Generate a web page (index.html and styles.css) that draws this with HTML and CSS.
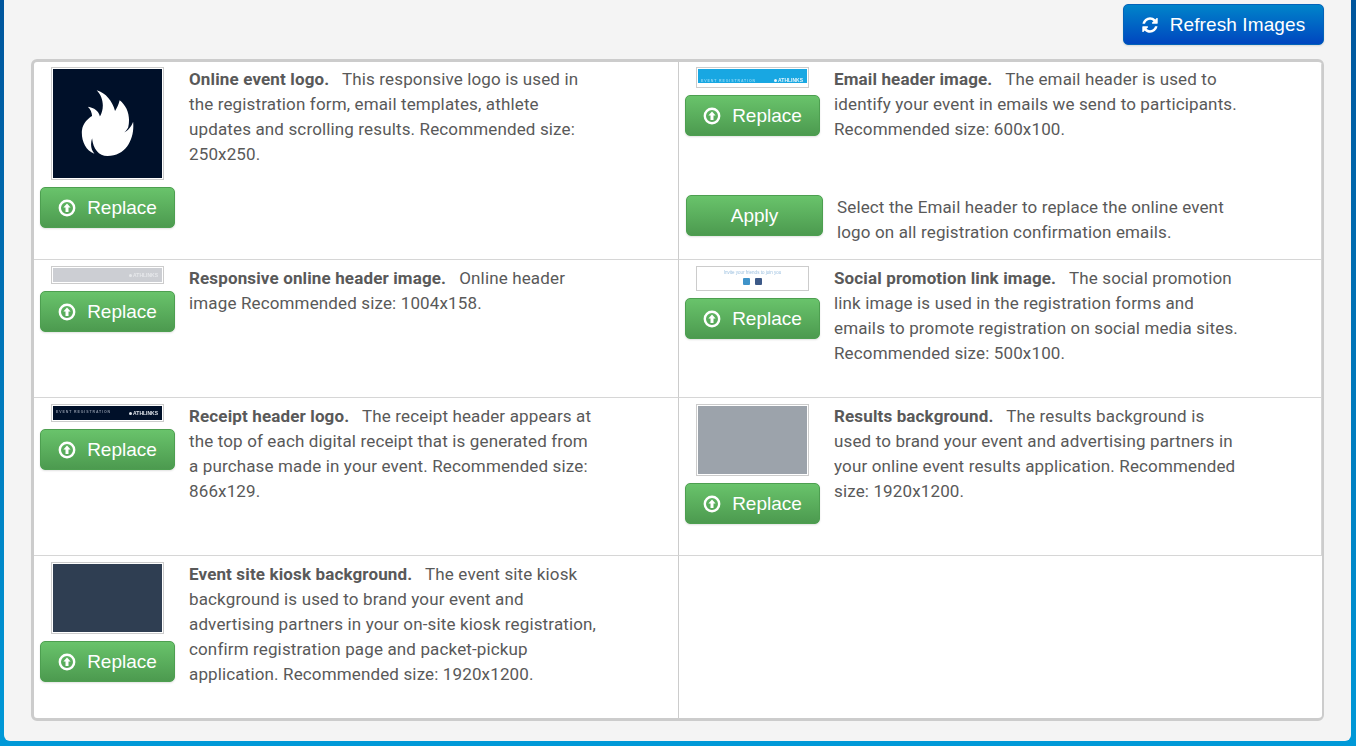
FILE: index.html
```html
<!DOCTYPE html>
<html lang="en">
<head>
<meta charset="utf-8">
<title>Event images</title>
<link rel="stylesheet" href="styles.css">
</head>
<body>
<svg class="defs" aria-hidden="true">
  <symbol id="i-up" viewBox="0 0 18 18">
    <circle cx="9" cy="9" r="7.2" fill="none" stroke="currentColor" stroke-width="2.4"/>
    <path d="M9 4.4 12.6 8.4 10.5 8.4 10.5 13 7.5 13 7.5 8.4 5.4 8.4Z" fill="currentColor"/>
  </symbol>
  <symbol id="i-refresh" viewBox="0 0 1792 1792">
    <path fill="currentColor" d="M1639 1056q0 5-1 7-64 268-268 434.5t-478 166.5q-146 0-282.5-55t-243.5-157l-129 129q-19 19-45 19t-45-19-19-45v-448q0-26 19-45t45-19h448q26 0 45 19t19 45-19 45l-137 137q71 66 161 102t187 36q134 0 250-65t186-179q11-17 53-117 8-23 30-23h192q13 0 22.5 9.5t9.5 22.5zm25-800v448q0 26-19 45t-45 19h-448q-26 0-45-19t-19-45 19-45l138-138q-148-137-349-137-134 0-250 65t-186 179q-11 17-53 117-8 23-30 23h-199q-13 0-22.5-9.5t-9.5-22.5v-7q65-268 270-434.5t480-166.5q146 0 284 55.5t245 156.5l130-129q19-19 45-19t45 19 19 45z"/>
  </symbol>
</svg>
<main class="panel">
  <div class="toolbar">
    <button class="btn btn-blue" type="button"><svg class="ico"><use href="#i-refresh"/></svg>Refresh Images</button>
  </div>
  <section class="grid">
    <article class="cell">
      <div class="media">
        <div class="thumb thumb-logo">
          <svg class="flame" viewBox="159 207 332 332"><path fill="#fff" d="M292 272C320 280 340 305 348 335 354 325 359 314 362 302 385 320 396 350 388 385 383 394 378 399 373 402 388 396 398 382 403 368 408 415 385 472 325 472 298 472 281 450 278 418 272 438 275 452 285 465 258 455 245 425 247 395 250 370 268 356 278 350 278 340 272 328 265 322 285 325 298 335 302 352 315 330 315 295 292 272Z"/></svg>
        </div>
        <button class="btn btn-green" type="button"><svg class="ico"><use href="#i-up"/></svg>Replace</button>
      </div>
      <p class="desc"><b>Online event logo.</b>&nbsp;&nbsp; This responsive logo is used in the registration form, email templates, athlete updates and scrolling results. Recommended size: 250x250.</p>
    </article>
    <article class="cell cell-right cell-email">
      <div class="entry">
        <div class="media">
          <div class="thumb thumb-email">
            <span class="thumb-small">EVENT REGISTRATION</span><span class="thumb-brand">ATHLINKS</span>
          </div>
          <button class="btn btn-green" type="button"><svg class="ico"><use href="#i-up"/></svg>Replace</button>
        </div>
        <p class="desc"><b>Email header image.</b>&nbsp;&nbsp; The email header is used to identify your event in emails we send to participants. Recommended size: 600x100.</p>
      </div>
      <div class="apply-row">
        <button class="btn btn-green btn-apply" type="button">Apply</button>
        <p class="desc">Select the Email header to replace the online event logo on all registration confirmation emails.</p>
      </div>
    </article>
    <article class="cell">
      <div class="media">
        <div class="thumb thumb-online"><span class="thumb-brand">ATHLINKS</span></div>
        <button class="btn btn-green" type="button"><svg class="ico"><use href="#i-up"/></svg>Replace</button>
      </div>
      <p class="desc"><b>Responsive online header image.</b>&nbsp;&nbsp; Online header image Recommended size: 1004x158.</p>
    </article>
    <article class="cell cell-right">
      <div class="media">
        <div class="thumb thumb-social">
          <span class="social-text">Invite your friends to join you</span>
          <span class="social-icons"><i class="dot dot-tw"></i><i class="dot dot-fb"></i></span>
        </div>
        <button class="btn btn-green" type="button"><svg class="ico"><use href="#i-up"/></svg>Replace</button>
      </div>
      <p class="desc"><b>Social promotion link image.</b>&nbsp;&nbsp; The social promotion link image is used in the registration forms and emails to promote registration on social media sites. Recommended size: 500x100.</p>
    </article>
    <article class="cell">
      <div class="media">
        <div class="thumb thumb-receipt">
          <span class="thumb-small">EVENT REGISTRATION</span><span class="thumb-brand">ATHLINKS</span>
        </div>
        <button class="btn btn-green" type="button"><svg class="ico"><use href="#i-up"/></svg>Replace</button>
      </div>
      <p class="desc"><b>Receipt header logo.</b>&nbsp;&nbsp; The receipt header appears at the top of each digital receipt that is generated from a purchase made in your event. Recommended size: 866x129.</p>
    </article>
    <article class="cell cell-right">
      <div class="media">
        <div class="thumb thumb-results"></div>
        <button class="btn btn-green" type="button"><svg class="ico"><use href="#i-up"/></svg>Replace</button>
      </div>
      <p class="desc"><b>Results background.</b>&nbsp;&nbsp; The results background is used to brand your event and advertising partners in your online event results application. Recommended size: 1920x1200.</p>
    </article>
    <article class="cell cell-last">
      <div class="media">
        <div class="thumb thumb-kiosk"></div>
        <button class="btn btn-green" type="button"><svg class="ico"><use href="#i-up"/></svg>Replace</button>
      </div>
      <p class="desc"><b>Event site kiosk background.</b>&nbsp;&nbsp; The event site kiosk background is used to brand your event and advertising partners in your on-site kiosk registration, confirm registration page and packet-pickup application. Recommended size: 1920x1200.</p>
    </article>
    <div class="cell-empty"></div>
  </section>
</main>
</body>
</html>
```
FILE: styles.css
```css
* { box-sizing: border-box; }
html, body { height: 100%; }
body {
  margin: 0;
  padding: 0 5px 5px 4px;
  overflow: hidden;
  background: linear-gradient(to bottom, #00559c 0%, #0099d8 100%);
  font-family: Roboto, "Liberation Sans", sans-serif;
  font-size: 17px;
  letter-spacing: .14px;
  line-height: 25px;
  color: #595959;
}
.defs { position: absolute; width: 0; height: 0; }
.panel {
  height: 741px;
  padding: 4px 27px 0;
  background: #f4f4f4;
  border-radius: 0 0 6px 6px;
}
.toolbar { display: flex; justify-content: flex-end; height: 55px; }
.btn {
  display: inline-flex;
  align-items: center;
  justify-content: center;
  height: 41px;
  padding: 0;
  border: 1px solid;
  border-radius: 5px;
  color: #fff;
  font-family: "Liberation Sans", Arial, sans-serif;
  font-size: 19px;
  letter-spacing: 0;
  box-shadow: 0 1px 2px rgba(0, 0, 0, .12);
}
.btn-blue {
  width: 201px;
  background: linear-gradient(to bottom, #0084ca, #0046bf);
  border-color: #0463b9;
  letter-spacing: .1px;
}
.btn-blue .ico { margin-right: 11px; margin-left: -1px; }
.btn-green {
  width: 135px;
  background: linear-gradient(to bottom, #69c36b, #4c9a4f);
  border-color: #4d9f50;
}
.btn-green .ico { margin-right: 11px; }
.btn-apply { width: 137px; flex: none; }
.ico { width: 18px; height: 18px; flex: none; }
.grid {
  display: grid;
  grid-template-columns: 645px 1fr;
  grid-template-rows: auto auto auto 1fr;
  height: 662px;
  border: 3px solid #ccc;
  border-right-width: 2px;
  border-radius: 6px;
  background: #fff;
  overflow: hidden;
}
.cell {
  display: flex;
  gap: 14px;
  padding: 6px 0 31px 6px;
  border-bottom: 1px solid #d6d6d6;
  border-right: 1px solid #ccc;
}
.grid > .cell:nth-child(-n+2) { padding-top: 5px; }
.cell-right { border-right: 1px solid #d6d6d6; }
.cell-email { display: block; padding-bottom: 14px; }
.cell-last { border-bottom: 0; padding-bottom: 0; }
.entry, .apply-row { display: flex; gap: 14px; }
.apply-row { margin: 53px 0 0 1px; }
.media {
  display: flex;
  flex-direction: column;
  align-items: center;
  gap: 7px;
  width: 135px;
  flex: none;
}
.desc { margin: 0; width: 409px; }
.cell-right .desc { width: 407px; }
.desc b { font-weight: 700; }
.thumb {
  width: 113px;
  padding: 1px;
  border: 1px solid #ccc;
  background-clip: content-box;
  display: flex;
  align-items: center;
  overflow: hidden;
}
.thumb-logo { height: 113px; background-color: #001029; }
.flame { display: block; width: 100%; height: 100%; filter: blur(.6px); }
.thumb-small, .thumb-brand, .social-text { filter: blur(.7px); white-space: nowrap; }
.thumb-small {
  font: 700 3.5px/1 "Liberation Sans", sans-serif;
  letter-spacing: .9px;
  margin-left: 3px;
}
.thumb-brand {
  font: 700 5px/1 "Liberation Sans", sans-serif;
  letter-spacing: 0;
  margin-left: auto;
  margin-right: 4px;
}
.thumb-brand::before {
  content: "";
  display: inline-block;
  width: 3px;
  height: 3px;
  margin-right: 1px;
  border-radius: 50%;
  background: currentColor;
}
.thumb-email {
  height: 21px;
  background-color: #18a7e2;
  color: #8bd6f5;
  align-items: flex-end;
  padding-bottom: 4px;
}
.thumb-email .thumb-brand { color: #e4f6fd; }
.thumb-online {
  height: 18px;
  background-color: #ccced3;
  color: #e6e8eb;
}
.thumb-receipt {
  height: 18px;
  background-color: #001029;
  color: #8a94a5;
}
.thumb-receipt .thumb-brand { color: #dfe4ea; }
.thumb-social {
  height: 25px;
  flex-direction: column;
  padding: 3px 1px 0;
}
.social-text {
  font: 400 4.5px/5px "Liberation Sans", sans-serif;
  letter-spacing: 0;
  color: #9cc0e0;
}
.social-icons { display: flex; gap: 5px; margin-top: 3px; filter: blur(.4px); }
.dot { display: block; width: 7px; height: 7px; border-radius: 1px; }
.dot-tw { background: #3f93c9; }
.dot-fb { background: #3d5a88; }
.thumb-results { height: 72px; background-color: #9ca3ab; }
.thumb-kiosk { height: 72px; background-color: #2f3e52; }
```
